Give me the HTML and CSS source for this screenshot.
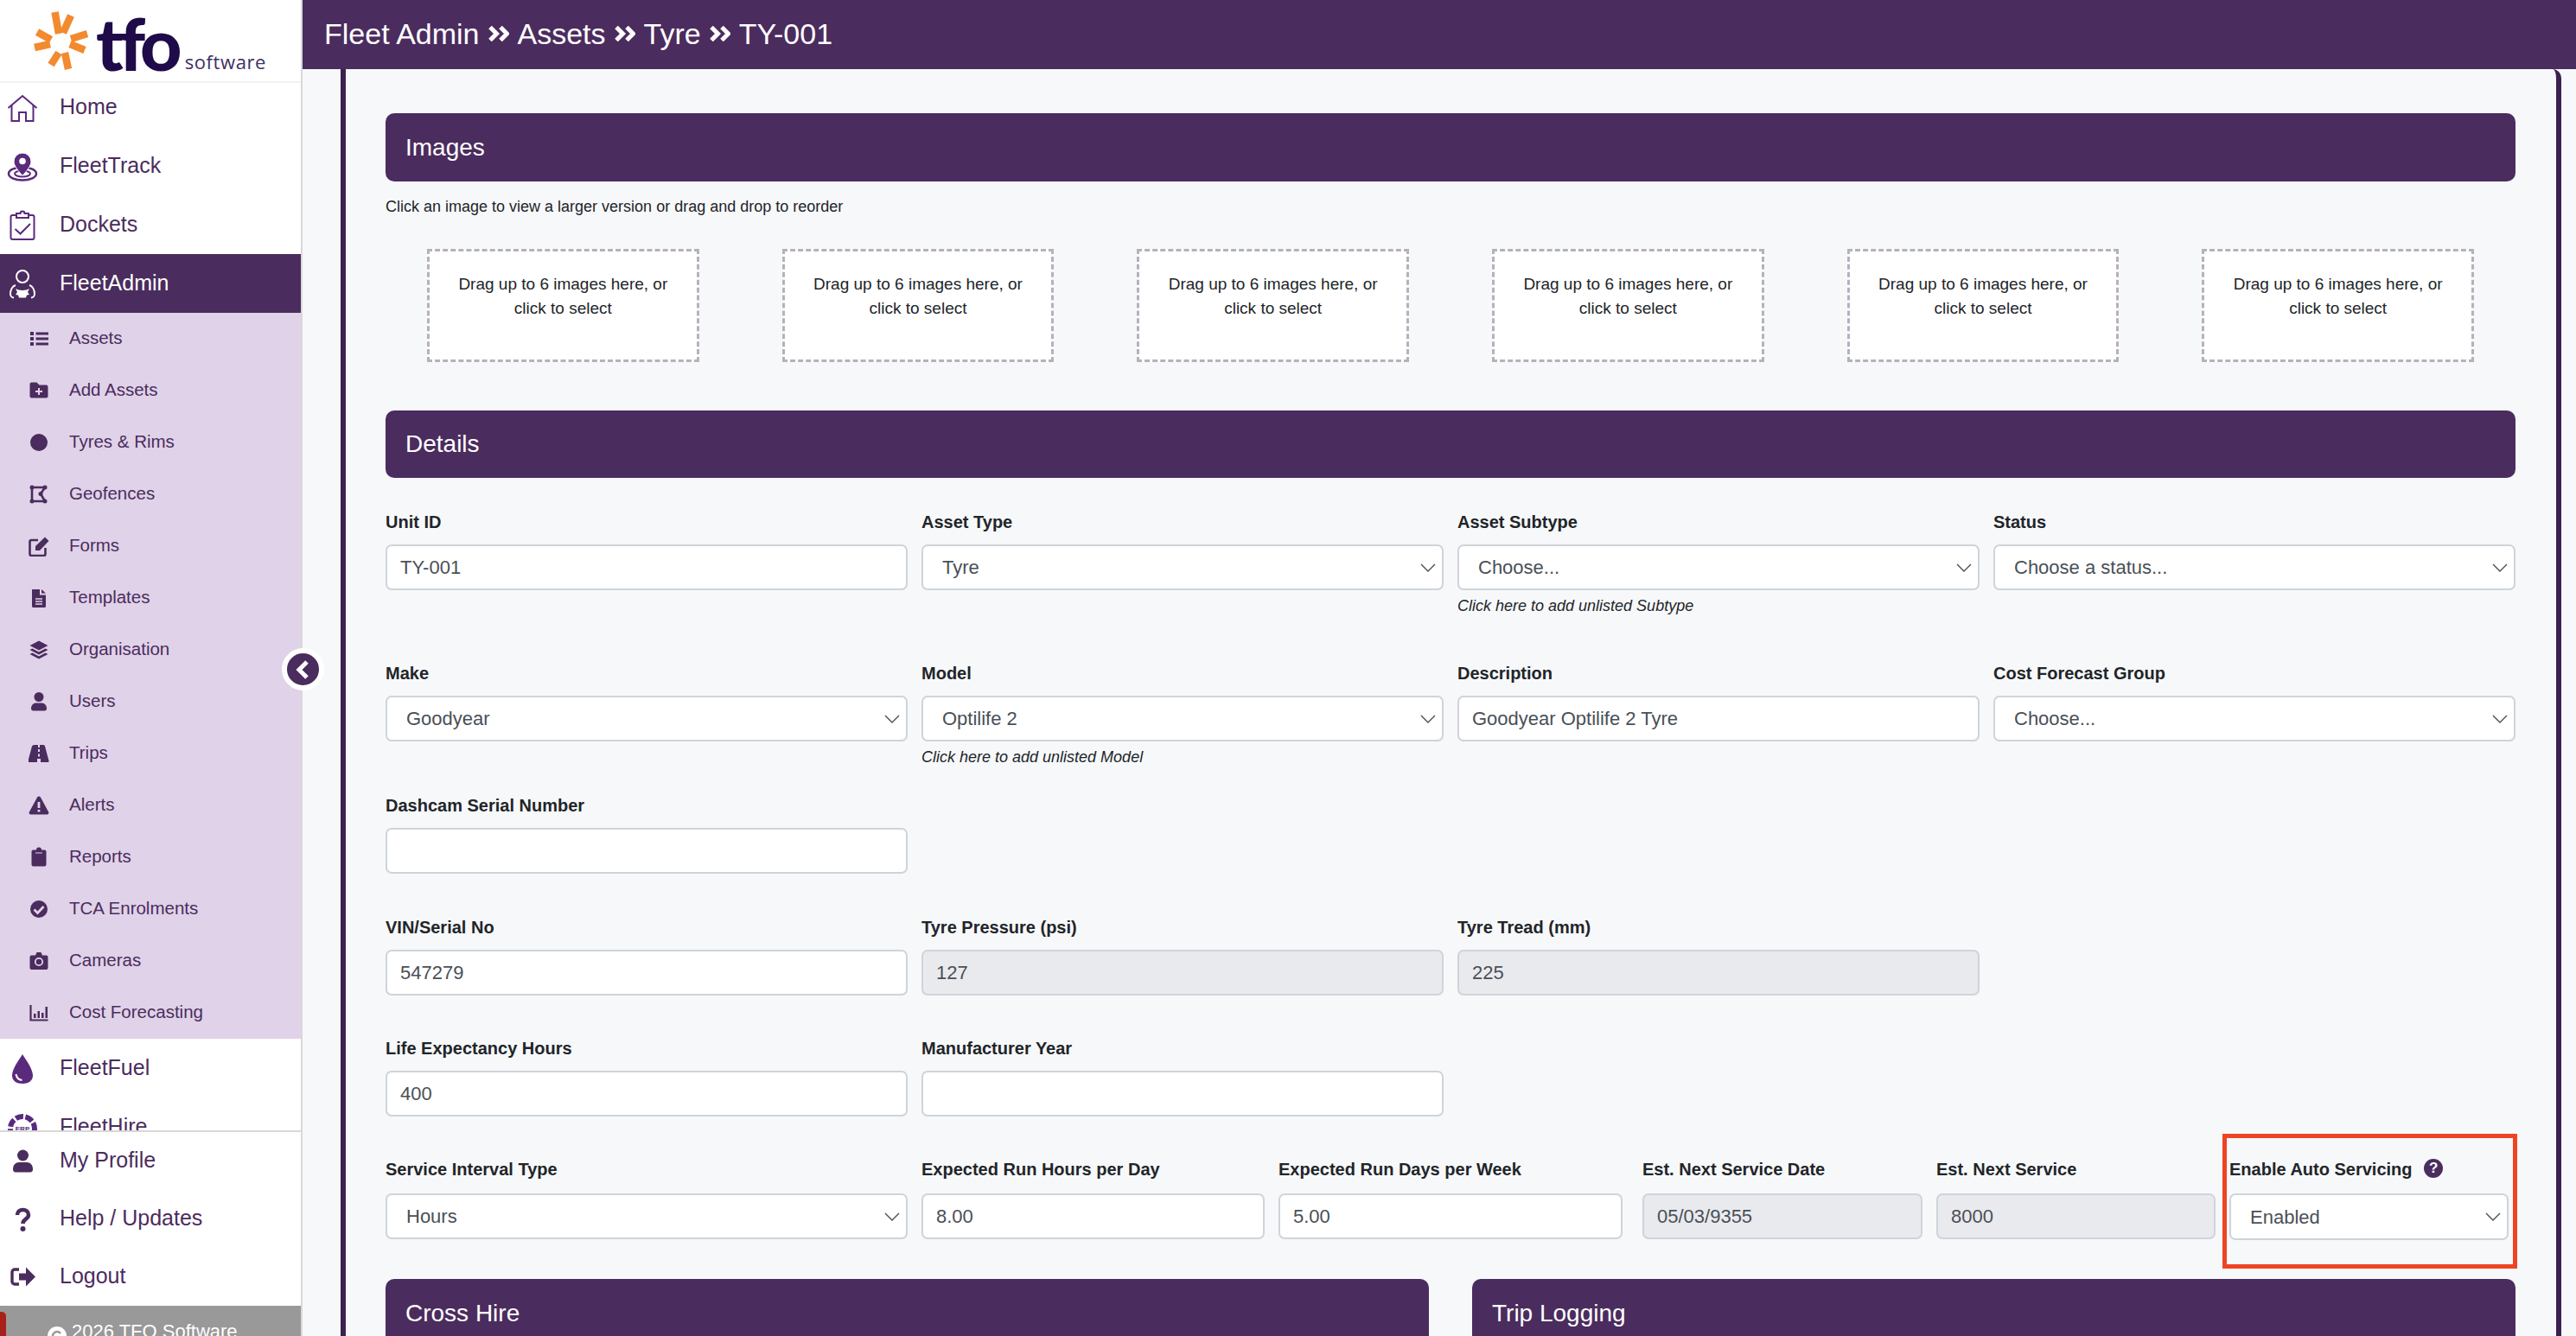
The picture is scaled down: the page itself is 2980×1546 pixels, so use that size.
FILE: index.html
```html
<!DOCTYPE html>
<html lang="en">
<head>
    <meta charset="UTF-8" />
    <title>Fleet Admin - TY-001</title>
    <link rel="stylesheet" href="styles.css">
</head>
<body>
<div class="app">
    <aside class="sidebar">
        <div class="brand">
            <svg class="brand-star" width="70" height="70" viewBox="34 12 70 70">
                <g stroke="#f28a30" stroke-width="8.5" fill="none">
                    <line x1="66" y1="40" x2="61.5" y2="15"/>
                    <line x1="71" y1="39" x2="80" y2="19"/>
                    <line x1="80" y1="46" x2="99" y2="40"/>
                    <line x1="79" y1="52" x2="96" y2="59"/>
                    <line x1="73" y1="62" x2="77" y2="81"/>
                    <line x1="66" y1="62" x2="57" y2="76"/>
                    <line x1="56" y1="52" x2="38" y2="56"/>
                    <line x1="57" y1="47" x2="41" y2="38"/>
                </g>
            </svg>
            <span class="brand-name">tfo</span>
            <span class="brand-sub">software</span>
        </div>

        <nav class="nav">
            <a class="nav-item">
                <svg class="ico" viewBox="0 0 36 36" fill="none" stroke="#5a2a7c" stroke-width="2"><path d="M1.5 19 18 5l16.500 14"/><path d="M5.500 16v18H14V24h8v10h8.500V16"/></svg>
                <span>Home</span>
            </a>
            <a class="nav-item">
                <svg class="ico" viewBox="0 0 36 36"><ellipse cx="18" cy="27" rx="16" ry="7.500" fill="none" stroke="#5a2a7c" stroke-width="2.500"/><ellipse cx="18" cy="27" rx="9" ry="3.500" fill="none" stroke="#5a2a7c" stroke-width="2"/><path d="M18 3a10 10 0 0 0-10 10c0 6.500 10 16 10 16s10-9.500 10-16A10 10 0 0 0 18 3z" fill="#5a2a7c" stroke="#fff"/><circle cx="18" cy="12.500" r="3.800" fill="#fff"/></svg>
                <span>FleetTrack</span>
            </a>
            <a class="nav-item">
                <svg class="ico" viewBox="0 0 36 36" fill="none" stroke="#5a2a7c" stroke-width="2"><rect x="4.500" y="7" width="27" height="28" rx="2"/><path d="M11 10V5h4.500a2.500 2.500 0 0 1 5 0H25v5z" fill="#fff"/><path d="M9.500 23l6 5.500L27 17"/></svg>
                <span>Dockets</span>
            </a>
            <a class="nav-item nav-item-active">
                <svg class="ico" viewBox="0 0 36 36" fill="none" stroke="#fff" stroke-width="2"><circle cx="18" cy="10" r="7"/><path d="M10 20c-4 1-6 6-6 10 0 3 2 4.500 4 4.500M26 20c4 1 6 6 6 10 0 3-2 4.500-4 4.500"/><path d="M10 24c4 2.500 12 2.500 16 0l-2 4 2 3-3 .5-1 3h-8l-1-3-3-.5 2-3z" fill="#fff" stroke="none"/></svg>
                <span>FleetAdmin</span>
            </a>
            <div class="subnav">
                <a class="sub-item"><svg class="sub-ico" viewBox="0 0 24 24"><path d="M2 4h4v4H2zM2 10h4v4H2zM2 16h4v4H2zM8.500 4.500H23v3H8.500zM8.500 10.500H23v3H8.500zM8.500 16.500H23v3H8.500z"/></svg><span>Assets</span></a>
                <a class="sub-item"><svg class="sub-ico" viewBox="0 0 24 24"><path d="M1.500 4.500a2 2 0 0 1 2-2h6l3 3h8a2 2 0 0 1 2 2v11a2 2 0 0 1-2 2h-17a2 2 0 0 1-2-2z"/><path d="M12 9v8M8 13h8" stroke="#e0d2e8" stroke-width="2"/></svg><span>Add Assets</span></a>
                <a class="sub-item"><svg class="sub-ico" viewBox="0 0 24 24"><circle cx="12" cy="12" r="10"/></svg><span>Tyres &amp; Rims</span></a>
                <a class="sub-item"><svg class="sub-ico" viewBox="0 0 24 24"><path d="M4 4h15l-5 7.500L19 20H4z" fill="none" stroke="#4b2c5e" stroke-width="2.600"/><circle cx="4" cy="4" r="2.500"/><circle cx="19" cy="4" r="2.500"/><circle cx="14" cy="11.500" r="2.500"/><circle cx="19" cy="20" r="2.500"/><circle cx="4" cy="20" r="2.500"/></svg><span>Geofences</span></a>
                <a class="sub-item"><svg class="sub-ico" viewBox="0 0 24 24"><path d="M11 5H3.500A2 2 0 0 0 1.500 7v14a2 2 0 0 0 2 2h14a2 2 0 0 0 2-2v-7" fill="none" stroke="#4b2c5e" stroke-width="2.600"/><path d="M8 12 19 1.500l4.500 4.500L13 17H8z"/></svg><span>Forms</span></a>
                <a class="sub-item"><svg class="sub-ico" viewBox="0 0 24 24"><path d="M4 2h9v6.500h7v13a1.500 1.500 0 0 1-1.500 1.500h-13A1.500 1.500 0 0 1 4 21.500z"/><path d="M15 2l5 4.500h-5z"/><path d="M8 13h8M8 16h8M8 19h8" stroke="#e0d2e8" stroke-width="1.500"/></svg><span>Templates</span></a>
                <a class="sub-item"><svg class="sub-ico" viewBox="0 0 24 24"><path d="M12 1.500 22.500 7 12 12.500 1.500 7z"/><path d="M4.500 10.500 12 14.500l7.500-4 3 1.500L12 17.500 1.500 12zM4.500 15.500 12 19.500l7.500-4 3 1.500L12 22.500 1.500 17z"/></svg><span>Organisation</span></a>
                <a class="sub-item"><svg class="sub-ico" viewBox="0 0 24 24"><circle cx="12" cy="6.500" r="5.500"/><path d="M3 20c0-4 2.500-6.500 6-6.500h6c3.500 0 6 2.500 6 6.500 0 1.500-1 2.500-2.500 2.500h-13C4 22.500 3 21.500 3 20z"/></svg><span>Users</span></a>
                <a class="sub-item"><svg class="sub-ico" viewBox="0 0 24 24"><path d="M7 2h4v3h2V2h4c1 0 1.500.5 2 1.500l4.500 17c.2 1-.3 1.500-1 1.500H14v-4h-4v4H.5c-.7 0-1.200-.5-1-1.500L4 3.500C4.500 2.500 6 2 7 2z"/><path d="M12 7v3M12 12.500v3" stroke="#e0d2e8" stroke-width="2"/></svg><span>Trips</span></a>
                <a class="sub-item"><svg class="sub-ico" viewBox="0 0 24 24"><path d="M12 1.500c.8 0 1.500.4 2 1.200l9.200 17c.6 1.200-.2 2.800-1.800 2.800H2.600C1 22.500.2 20.900.8 19.700l9.200-17c.5-.8 1.200-1.200 2-1.200z"/><path d="M12 8v7M12 17v2.500" stroke="#e0d2e8" stroke-width="2.800"/></svg><span>Alerts</span></a>
                <a class="sub-item"><svg class="sub-ico" viewBox="0 0 24 24"><path d="M9 3.500a3 3 0 0 1 6 0h3.500a2 2 0 0 1 2 2v15a2 2 0 0 1-2 2h-13a2 2 0 0 1-2-2v-15a2 2 0 0 1 2-2z"/><path d="M8 7h8" stroke="#e0d2e8" stroke-width="1"/></svg><span>Reports</span></a>
                <a class="sub-item"><svg class="sub-ico" viewBox="0 0 24 24"><circle cx="12" cy="12" r="10"/><path d="M6.500 12.500l4 4 7-7.500" fill="none" stroke="#e0d2e8" stroke-width="2.800"/></svg><span>TCA Enrolments</span></a>
                <a class="sub-item"><svg class="sub-ico" viewBox="0 0 24 24"><path d="M3.500 5.500H8L9.500 2h5L16 5.500h4.500a2 2 0 0 1 2 2V20a2 2 0 0 1-2 2h-17a2 2 0 0 1-2-2V7.500a2 2 0 0 1 2-2z"/><circle cx="12" cy="13" r="4.200" fill="none" stroke="#e0d2e8" stroke-width="1.800"/></svg><span>Cameras</span></a>
                <a class="sub-item"><svg class="sub-ico" viewBox="0 0 24 24"><path d="M2.500 3v17.500H22.500" fill="none" stroke="#4b2c5e" stroke-width="2.200"/><path d="M6 13h2.500v5H6zM10.500 10H13v8h-2.500zM15 12h2.500v6H15zM19.500 5H22v13h-2.500z"/></svg><span>Cost Forecasting</span></a>
            </div>
            <a class="nav-item">
                <svg class="ico" viewBox="0 0 36 36"><path d="M18 2C16 6 6 18 6 26.500 6 33 11.500 36 18 36s12-3 12-9.500C30 18 20 6 18 2z" fill="#5a2a7c"/><path d="M10.500 25c.5 3.500 3 6.500 7 7" fill="none" stroke="#fff" stroke-width="2"/></svg>
                <span>FleetFuel</span>
            </a>
            <a class="nav-item">
                <svg class="ico" viewBox="0 0 36 36"><circle cx="18" cy="20" r="14" fill="none" stroke="#5a2a7c" stroke-width="6" stroke-dasharray="9 2.500"/><text class="erp-mark" x="18" y="23" text-anchor="middle">ERP</text></svg>
                <span>FleetHire</span>
            </a>
        </nav>

        <div class="nav-bottom">
            <a class="nav-item nav-item-low">
                <svg class="ico" viewBox="0 0 36 36" fill="#4b2c5e"><circle cx="18.500" cy="11" r="6.500"/><path d="M7 27c0-5 3-8 7-8h9c4 0 7 3 7 8 0 2-1 3.500-3 3.500H10c-2 0-3-1.500-3-3.500z"/></svg>
                <span>My Profile</span>
            </a>
            <a class="nav-item nav-item-low">
                <svg class="ico" viewBox="0 0 36 36"><path d="M12 13c0-4 3-6 6.500-6s6.500 2 6.500 6c0 5-6.500 4.500-6.500 10" fill="none" stroke="#4b2c5e" stroke-width="4.600"/><circle cx="18.500" cy="29" r="3" fill="#4b2c5e"/></svg>
                <span>Help / Updates</span>
            </a>
            <a class="nav-item nav-item-low">
                <svg class="ico" viewBox="0 0 36 36"><path d="M14 9H9a3 3 0 0 0-3 3v11a3 3 0 0 0 3 3h5" fill="none" stroke="#4b2c5e" stroke-width="3.400"/><path d="M14 13.500h8V6.500l11 11-11 11v-7h-8z" fill="#4b2c5e"/></svg>
                <span>Logout</span>
            </a>
        </div>

        <div class="side-footer">
            <svg class="copy-ico" width="22" height="22" viewBox="0 0 22 22"><circle cx="11" cy="11" r="11" fill="#fff"/><path d="M15 8a5 5 0 1 0 0 6" fill="none" stroke="#999" stroke-width="2.500"/></svg>
            <span>2026 TFO Software</span>
            <div class="side-tab"></div>
        </div>
    </aside>

    <button class="collapse-btn" aria-label="Collapse">
        <svg width="20" height="24" viewBox="0 0 20 24"><path d="M14 3 5 12l9 9" fill="none" stroke="#fff" stroke-width="5"/></svg>
    </button>

    <main class="main">
        <header class="topbar">
            <span>Fleet Admin</span>
            <svg class="crumb-sep" viewBox="0 0 24 18"><path d="M2 1.500l7.500 7.500L2 16.500M14 1.500l7.500 7.500L14 16.500" fill="none" stroke="#fff" stroke-width="5"/></svg>
            <span>Assets</span>
            <svg class="crumb-sep" viewBox="0 0 24 18"><path d="M2 1.500l7.500 7.500L2 16.500M14 1.500l7.500 7.500L14 16.500" fill="none" stroke="#fff" stroke-width="5"/></svg>
            <span>Tyre</span>
            <svg class="crumb-sep" viewBox="0 0 24 18"><path d="M2 1.500l7.500 7.500L2 16.500M14 1.500l7.500 7.500L14 16.500" fill="none" stroke="#fff" stroke-width="5"/></svg>
            <span>TY-001</span>
        </header>

        <div class="panel">
            <h2 class="card-head">Images</h2>
            <p class="hint">Click an image to view a larger version or drag and drop to reorder</p>
            <div class="dropzones">
                <div class="dropzone">Drag up to 6 images here, or click to select</div>
                <div class="dropzone">Drag up to 6 images here, or click to select</div>
                <div class="dropzone">Drag up to 6 images here, or click to select</div>
                <div class="dropzone">Drag up to 6 images here, or click to select</div>
                <div class="dropzone">Drag up to 6 images here, or click to select</div>
                <div class="dropzone">Drag up to 6 images here, or click to select</div>
            </div>

            <h2 class="card-head card-head-details">Details</h2>

            <div class="form-row row-first">
                <div class="group"><label>Unit ID</label><input value="TY-001"></div>
                <div class="group"><label>Asset Type</label><select><option>Tyre</option></select></div>
                <div class="group"><label>Asset Subtype</label><select><option>Choose...</option></select><a class="helper">Click here to add unlisted Subtype</a></div>
                <div class="group"><label>Status</label><select><option>Choose a status...</option></select></div>
            </div>

            <div class="form-row row-second">
                <div class="group"><label>Make</label><select><option>Goodyear</option></select></div>
                <div class="group"><label>Model</label><select><option>Optilife 2</option></select><a class="helper">Click here to add unlisted Model</a></div>
                <div class="group"><label>Description</label><input value="Goodyear Optilife 2 Tyre"></div>
                <div class="group"><label>Cost Forecast Group</label><select><option>Choose...</option></select></div>
            </div>

            <div class="form-row row-third">
                <div class="group"><label>Dashcam Serial Number</label><input value=""></div>
            </div>

            <div class="form-row">
                <div class="group"><label>VIN/Serial No</label><input value="547279"></div>
                <div class="group"><label>Tyre Pressure (psi)</label><input value="127" disabled></div>
                <div class="group"><label>Tyre Tread (mm)</label><input value="225" disabled></div>
            </div>

            <div class="form-row">
                <div class="group"><label>Life Expectancy Hours</label><input value="400"></div>
                <div class="group"><label>Manufacturer Year</label><input value=""></div>
            </div>

            <div class="form-row service-row">
                <div class="group"><label>Service Interval Type</label><select><option>Hours</option></select></div>
                <div class="group"><label>Expected Run Hours per Day</label><input value="8.00"></div>
                <div class="group"><label>Expected Run Days per Week</label><input value="5.00"></div>
                <div class="group group-shift"><label>Est. Next Service Date</label><input value="05/03/9355" disabled></div>
                <div class="group"><label>Est. Next Service</label><input value="8000" disabled></div>
                <div class="group group-auto">
                    <label>Enable Auto Servicing <span class="help-dot">?</span></label>
                    <select><option>Enabled</option></select>
                    <div class="callout"></div>
                </div>
            </div>

            <div class="bottom-cards">
                <h2 class="card-head">Cross Hire</h2>
                <h2 class="card-head">Trip Logging</h2>
            </div>
        </div>
    </main>
</div>
</body>
</html>
```

FILE: styles.css
```css
* {
    box-sizing: border-box;
}

body {
    margin: 0;
    height: 100vh;
    overflow: hidden;
    font-family: "Liberation Sans", Arial, sans-serif;
    background-color: #f7f8fa;
    color: #212529;
}

.app {
    display: flex;
    height: 100vh;
    position: relative;
}

/* sidebar */
.sidebar {
    width: 350px;
    flex: none;
    display: flex;
    flex-direction: column;
    height: 100%;
    background: #fff;
    border-right: 2px solid #d8d8d8;
    color: #4b2c5e;
}

.brand {
    height: 96px;
    flex: none;
    display: flex;
    align-items: flex-end;
    padding: 0 0 13px 36px;
    border-bottom: 2px solid #f2f2f4;
}

.brand-star {
    flex: none;
}

.brand-name {
    font-family: "Lato", sans-serif;
    font-weight: 900;
    font-size: 84px;
    line-height: 62px;
    letter-spacing: -5px;
    color: #1f0a4a;
    margin-left: 5px;
}

.brand-sub {
    font-family: "Open Sans", sans-serif;
    font-size: 22px;
    line-height: 22px;
    letter-spacing: .6px;
    color: #40305f;
    margin-left: 8px;
    margin-bottom: -1px;
}

.nav {
    flex: 1;
    overflow: hidden;
    min-height: 0;
}

.nav > .nav-item:first-child {
    margin-top: -6px;
}

.nav-item {
    display: flex;
    align-items: center;
    height: 68px;
    padding-left: 8px;
    font-size: 25px;
    color: #4b2c5e;
}

.nav-item span,
.sub-item span {
    margin-bottom: 2px;
}

.nav-item-low {
    height: 67px;
}

.nav-item-active {
    background: #4b2c5e;
    color: #fff;
}

.ico {
    width: 36px;
    height: 36px;
    flex: none;
    margin-right: 25px;
}

.erp-mark {
    font-size: 8px;
    font-weight: bold;
    fill: #5a2a7c;
}

.subnav {
    background: #e0d2e8;
}

.sub-item {
    display: flex;
    align-items: center;
    height: 60px;
    padding-left: 33px;
    font-size: 20.500px;
    color: #4b2c5e;
}

.sub-ico {
    width: 24px;
    height: 24px;
    flex: none;
    margin-right: 23px;
    fill: #4b2c5e;
}

.nav-bottom {
    flex: none;
    border-top: 2px solid #d8d8d8;
}

.side-footer {
    flex: none;
    height: 35px;
    overflow: hidden;
    background: #999;
    color: #fff;
    font-size: 22px;
    line-height: 26px;
    padding: 17px 0 0 55px;
    display: flex;
    gap: 6px;
    position: relative;
}

.copy-ico {
    flex: none;
    margin-top: 7px;
}

.side-tab {
    position: absolute;
    left: 0;
    top: 7px;
    width: 7px;
    height: 40px;
    background: #a8201a;
    border-radius: 0 5px 0 0;
}

.collapse-btn {
    position: absolute;
    left: 326px;
    top: 750px;
    width: 49px;
    height: 49px;
    padding: 0;
    display: flex;
    align-items: center;
    justify-content: center;
    border: 6px solid #fff;
    border-radius: 50%;
    background: #4b2c5e;
}

/* main */
.main {
    flex: 1;
    min-width: 0;
    display: flex;
    flex-direction: column;
    height: 100%;
}

.topbar {
    height: 80px;
    flex: none;
    display: flex;
    align-items: center;
    gap: 10px;
    padding: 0 0 2px 25px;
    background: #4b2c5e;
    color: #fff;
    font-size: 34px;
}

.crumb-sep {
    width: 24px;
    height: 18px;
    flex: none;
}

.panel {
    flex: 1;
    min-height: 0;
    overflow: hidden;
    margin: 0 17px 0 44px;
    padding: 51px 47px 0 46px;
    border-left: 6px solid #3c2150;
    border-right: 6px solid #3c2150;
    border-top-right-radius: 10px;
}

.card-head {
    margin: 0;
    height: 79px;
    display: flex;
    align-items: center;
    padding-left: 23px;
    background: #4b2c5e;
    color: #fff;
    font-size: 28px;
    font-weight: normal;
    border-radius: 10px;
}

.card-head-details {
    height: 78px;
}

.hint {
    margin: 18px 0 38px;
    font-size: 18px;
    line-height: 22px;
}

.dropzones {
    display: grid;
    grid-template-columns: repeat(6, 1fr);
    margin-bottom: 56px;
}

.dropzone {
    height: 131px;
    margin: 0 48px;
    padding: 24px 20px 0;
    background: #fff;
    border: 3px dashed #b5b1bd;
    font-size: 19px;
    line-height: 28px;
    text-align: center;
}

.form-row {
    display: grid;
    grid-template-columns: repeat(4, 1fr);
    column-gap: 16px;
    margin-bottom: 49px;
}

.row-first {
    margin-top: 39px;
    margin-bottom: 48px;
}

.row-second {
    margin-bottom: 26px;
}

.row-third {
    margin-bottom: 50px;
}

.group {
    min-width: 0;
    position: relative;
}

.group label {
    display: block;
    height: 24px;
    margin-bottom: 14px;
    font-size: 20px;
    line-height: 24px;
    font-weight: bold;
    white-space: nowrap;
}

.group input,
.group select {
    display: block;
    width: 100%;
    height: 53px;
    font-family: inherit;
    font-size: 22px;
    color: #495057;
    background-color: #fff;
    border: 2px solid #ced4da;
    border-radius: 7px;
    outline: none;
}

.group input {
    padding: 0 15px;
}

.group input:disabled {
    background-color: #e9eaee;
    color: #495057;
}

.group select {
    appearance: none;
    padding: 0 40px 0 22px;
    background-image: url("data:image/svg+xml,%3Csvg xmlns='http://www.w3.org/2000/svg' width='18' height='10' viewBox='0 0 18 10'%3E%3Cpath d='M1 1l8 8 8-8' fill='none' stroke='%23495057' stroke-width='1.400'/%3E%3C/svg%3E");
    background-repeat: no-repeat;
    background-position: right 7px center;
}

.helper {
    display: block;
    height: 36px;
    padding-top: 7px;
    font-size: 18px;
    line-height: 22px;
    font-style: italic;
}

.service-row {
    grid-template-columns: 604px 397px 398px 331px 323px 323px;
    margin-bottom: 45px;
}

.service-row label {
    margin-bottom: 16px;
}

.group-shift {
    padding-left: 7px;
}

.group-auto select {
    height: 54px;
    margin-top: 1px;
}

.help-dot {
    display: inline-block;
    width: 22px;
    height: 22px;
    margin-left: 8px;
    border-radius: 50%;
    background: #4b2c5e;
    color: #fff;
    font-size: 17px;
    line-height: 22px;
    text-align: center;
    vertical-align: top;
}

.callout {
    position: absolute;
    left: -8px;
    right: -10px;
    top: -29px;
    bottom: -33px;
    border: 5px solid #ee4423;
    pointer-events: none;
}

.bottom-cards {
    display: grid;
    grid-template-columns: 1fr 1fr;
    column-gap: 50px;
}
```
